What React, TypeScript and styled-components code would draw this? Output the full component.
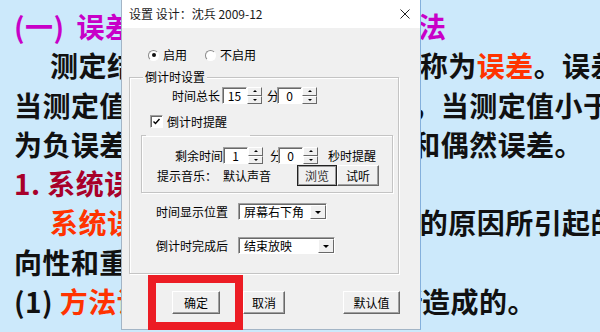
import styled, { createGlobalStyle } from "styled-components";

const GlobalStyle = createGlobalStyle`
  html, body { margin: 0; padding: 0; }
  body { background: #cce9fb; }
`;

const purple = "#c800c8";
const red = "#ff3300";
const darkRed = "#a8002a";

const Slide = styled.div`
  position: relative;
  width: 600px;
  height: 332px;
  overflow: hidden;
  box-sizing: border-box;
  padding: 7px 0 0 14px;
  background: #cce9fb;
  font-family: "Noto Sans CJK SC", "Noto Sans", sans-serif;
  font-weight: 700;
  font-size: 28px;
  letter-spacing: 0.45px;
  color: #111;
`;

const Line = styled.div<{ $indent?: number }>`
  height: 39.3px;
  line-height: 39.3px;
  white-space: nowrap;
  padding-left: ${(p) => p.$indent ?? 0}px;
`;

const Hl = styled.span<{ $c?: string; $gap?: number; $track?: number }>`
  color: ${(p) => p.$c ?? "inherit"};
  margin-right: ${(p) => p.$gap ?? 0}px;
  letter-spacing: ${(p) => (p.$track !== undefined ? `${p.$track}px` : "inherit")};
`;

const Dialog = styled.div`
  position: absolute;
  left: 121px;
  top: 0;
  width: 300px;
  height: 330px;
  box-sizing: border-box;
  display: flex;
  flex-direction: column;
  background: #f0f0f0;
  border: 1px solid #a3b5c6;
  border-top: 0;
  border-right-color: #84b0dc;
  font: 400 12px/16px "Noto Sans CJK SC", "Noto Sans", sans-serif;
  letter-spacing: 0;
  color: #000;
`;

const TitleBar = styled.div`
  height: 28px;
  flex-shrink: 0;
  display: flex;
  align-items: center;
  justify-content: space-between;
  padding: 0 10px 0 7px;
  background: #fff;
  color: #1a1a1a;
`;

const Body = styled.div`
  display: flex;
  flex-direction: column;
  align-items: flex-start;
`;

const RadioRow = styled.div`
  display: flex;
  align-items: center;
  gap: 18px;
  height: 16px;
  margin: 19px 0 0 26px;
`;

const Option = styled.label`
  display: flex;
  align-items: center;
  gap: 4px;
`;

const RadioDot = styled.span<{ $on?: boolean }>`
  position: relative;
  width: 11px;
  height: 11px;
  box-sizing: border-box;
  border-radius: 50%;
  background: #fff;
  border: 1px solid;
  border-color: #8a8a8a #fff #fff #8a8a8a;

  &::after {
    content: "";
    display: ${(p) => (p.$on ? "block" : "none")};
    position: absolute;
    left: 2.5px;
    top: 2.5px;
    width: 4px;
    height: 4px;
    border-radius: 50%;
    background: #111;
  }
`;

const Group = styled.fieldset<{ $w: number; $h: number; $top: number; $left: number }>`
  margin: ${(p) => p.$top}px 0 0 ${(p) => p.$left}px;
  padding: 0;
  width: ${(p) => p.$w}px;
  height: ${(p) => p.$h}px;
  min-width: 0;
  box-sizing: border-box;
  border: 1px solid #c4c4c4;
  box-shadow: inset 1px 1px 0 #fff, 1px 1px 0 #fff;
`;

const Legend = styled.legend<{ $left: number; $gap?: number }>`
  margin-left: ${(p) => p.$left}px;
  padding: ${(p) => (p.$gap ? "0" : "0 2px")};
  width: ${(p) => (p.$gap ? `${p.$gap}px` : "auto")};
  height: ${(p) => (p.$gap ? "0" : "16px")};
  line-height: 16px;
  background: #f0f0f0;
`;

const Row = styled.div<{ $top: number; $left: number; $h?: number }>`
  display: flex;
  align-items: center;
  height: ${(p) => p.$h ?? 17}px;
  margin: ${(p) => p.$top}px 0 0 ${(p) => p.$left}px;
  white-space: nowrap;
`;

const Label = styled.span<{ $w?: number; $gap?: number }>`
  width: ${(p) => (p.$w ? `${p.$w}px` : "auto")};
  margin-right: ${(p) => p.$gap ?? 0}px;
  flex-shrink: 0;
`;

const Unit = styled.span<{ $left: number; $w?: number }>`
  margin-left: ${(p) => p.$left}px;
  width: ${(p) => (p.$w ? `${p.$w}px` : "auto")};
  overflow: hidden;
  flex-shrink: 0;
`;

const Spin = styled.div`
  display: flex;
  height: 17px;
`;

const SpinInput = styled.div`
  width: 25px;
  box-sizing: border-box;
  display: flex;
  align-items: center;
  justify-content: center;
  background: #fff;
  border: 1px solid;
  border-color: #a0a0a0 #fff #fff #a0a0a0;
  box-shadow: inset 1px 1px 0 #696969;
  padding-top: 1px;
`;

const SpinButtons = styled.div`
  width: 15px;
  display: flex;
  flex-direction: column;
`;

const SpinButton = styled.span<{ $down?: boolean }>`
  flex: 1;
  display: flex;
  align-items: center;
  justify-content: center;
  box-sizing: border-box;
  background: #f0f0f0;
  border: 1px solid;
  border-color: #fff #696969 #696969 #fff;

  &::after {
    content: "";
    border-left: 2px solid transparent;
    border-right: 2px solid transparent;
    ${(p) => (p.$down ? "border-top: 2px solid #000;" : "border-bottom: 2px solid #000;")}
  }
`;

const CheckBox = styled.span`
  width: 13px;
  height: 13px;
  box-sizing: border-box;
  display: flex;
  background: #fff;
  border: 1px solid;
  border-color: #a0a0a0 #fff #fff #a0a0a0;
  box-shadow: inset 1px 1px 0 #696969;
  margin-right: 4px;
`;

const Select = styled.div<{ $w: number }>`
  width: ${(p) => p.$w}px;
  height: 17px;
  box-sizing: border-box;
  display: flex;
  align-items: center;
  justify-content: space-between;
  padding-left: 5px;
  background: #fff;
  border: 1px solid;
  border-color: #a0a0a0 #fff #fff #a0a0a0;
  box-shadow: inset 1px 1px 0 #696969;
`;

const DropButton = styled.span`
  width: 16px;
  height: 14px;
  margin-top: 1px;
  box-sizing: border-box;
  display: flex;
  align-items: center;
  justify-content: center;
  background: #f0f0f0;
  border: 1px solid;
  border-color: #fff #696969 #696969 #fff;

  &::after {
    content: "";
    border-left: 3px solid transparent;
    border-right: 3px solid transparent;
    border-top: 3px solid #000;
  }
`;

const Button = styled.button<{ $w: number; $h: number; $left?: number; $focus?: boolean }>`
  width: ${(p) => p.$w}px;
  height: ${(p) => p.$h}px;
  margin: 0 0 0 ${(p) => p.$left ?? 0}px;
  padding: 0;
  box-sizing: border-box;
  display: flex;
  align-items: center;
  justify-content: center;
  font: inherit;
  color: ${(p) => (p.$focus ? "#333" : "#000")};
  background: #f0f0f0;
  border: 1px solid;
  border-color: ${(p) => (p.$focus ? "#222" : "#fff #696969 #696969 #fff")};
  box-shadow: ${(p) =>
    p.$focus ? "inset 1px 1px 0 #9a9a9a, inset -1px -1px 0 #9a9a9a" : "inset -1px -1px 0 #a0a0a0"};
`;

const Marker = styled.div`
  position: absolute;
  left: 148px;
  top: 275px;
  width: 95px;
  height: 55px;
  box-sizing: border-box;
  border: 8px solid #ec1c24;
`;

const SpinField = ({ value }: { value: string }) => (
  <Spin>
    <SpinInput>{value}</SpinInput>
    <SpinButtons>
      <SpinButton />
      <SpinButton $down />
    </SpinButtons>
  </Spin>
);

const CloseIcon = () => (
  <svg width="10" height="10" viewBox="0 0 10 10">
    <path d="M0.5 0.5L9.5 9.5M9.5 0.5L0.5 9.5" stroke="#222" strokeWidth="1" fill="none" />
  </svg>
);

const App = () => (
  <>
    <GlobalStyle />
    <Slide>
      <Line>
        <Hl $c={purple} $gap={12}>(一)</Hl>
        <Hl $c={purple}>误差的产生原因及其减免方法</Hl>
      </Line>
      <Line $indent={36}>
        测定结果与真实值之间的差值称为<Hl $c={red}>误差</Hl>。误差有正负之分
      </Line>
      <Line>当测定值大于真值时，误差为正，当测定值小于真实值时，误差</Line>
      <Line>为负误差。误差可分为系统误差和偶然误差。</Line>
      <Line>
        <Hl $c={darkRed}>1. 系统误差</Hl>
      </Line>
      <Line $indent={36}>
        <Hl $c={red}>系统误差</Hl>是由分析过程中固定的原因所引起的误差，具有单
      </Line>
      <Line>向性和重复性。</Line>
      <Line>
        (1) <Hl $c={red}>方法误差</Hl>
        <Hl $track={-0.4}>：由分析方法本身所</Hl>造成的。
      </Line>

      <Dialog>
        <TitleBar>
          <span>设置 设计：沈兵 2009-12</span>
          <CloseIcon />
        </TitleBar>
        <Body>
          <RadioRow>
            <Option>
              <RadioDot $on />
              启用
            </Option>
            <Option>
              <RadioDot />
              不启用
            </Option>
          </RadioRow>

          <Group $top={6} $left={7} $w={270} $h={205}>
            <Legend $left={13}>倒计时设置</Legend>
            <Row $top={2} $left={42}>
              <Label $gap={2}>时间总长</Label>
              <SpinField value="15" />
              <Unit $left={5} $w={10}>分</Unit>
              <SpinField value="0" />
            </Row>

            <Row $top={11} $left={20} $h={13}>
              <CheckBox>
                <svg width="11" height="11" viewBox="0 0 11 11">
                  <path d="M2.5 5.5L4.5 7.5L8.5 3" stroke="#000" strokeWidth="1.4" fill="none" />
                </svg>
              </CheckBox>
              倒计时提醒
            </Row>

            <Group $top={7} $left={11} $w={252} $h={58}>
              <Legend $left={4} $gap={104} />
              <Row $top={11} $left={33}>
                <Label>剩余时间</Label>
                <SpinField value="1" />
                <Unit $left={7} $w={8}>分</Unit>
                <SpinField value="0" />
                <Unit $left={10}>秒时提醒</Unit>
              </Row>
              <Row $top={1} $left={15} $h={21}>
                <Label $gap={6}>提示音乐：</Label>
                <Label $gap={26}>默认声音</Label>
                <Button $w={40} $h={21} $focus>
                  浏览
                </Button>
                <Button $w={42} $h={21}>
                  试听
                </Button>
              </Row>
            </Group>

            <Row $top={10} $left={26}>
              <Label $w={82}>时间显示位置</Label>
              <Select $w={89}>
                屏幕右下角
                <DropButton />
              </Select>
            </Row>
            <Row $top={17} $left={26}>
              <Label $w={82}>倒计时完成后</Label>
              <Select $w={97}>
                结束放映
                <DropButton />
              </Select>
            </Row>
          </Group>

          <Row $top={17} $left={50} $h={23}>
            <Button $w={48} $h={23}>确定</Button>
            <Button $w={42} $h={23} $left={23}>取消</Button>
            <Button $w={57} $h={23} $left={58}>默认值</Button>
          </Row>
        </Body>
      </Dialog>
      <Marker />
    </Slide>
  </>
);

export default App;
